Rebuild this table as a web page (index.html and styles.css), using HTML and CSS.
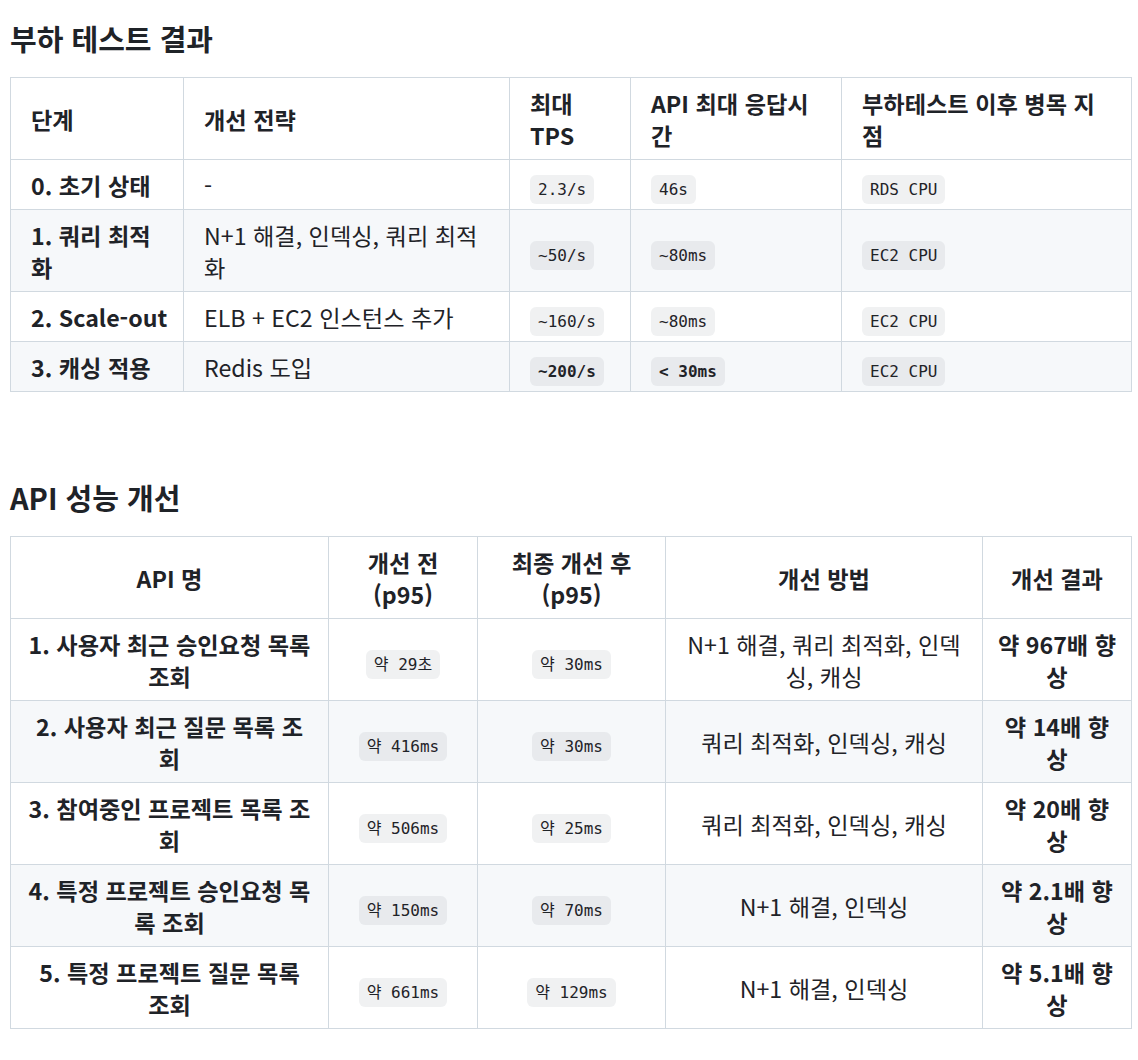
FILE: index.html
```html
<!DOCTYPE html>
<html lang="ko">
<head>
<meta charset="utf-8">
<title>부하 테스트 결과</title>
<link rel="stylesheet" href="styles.css">
</head>
<body>
<main class="doc">
  <section class="section">
    <h2 class="section-title">부하 테스트 결과</h2>
    <table class="grid grid-load">
      <colgroup>
        <col class="c173"><col class="c326"><col class="c121"><col class="c211"><col class="c290">
      </colgroup>
      <thead>
        <tr><th class="step">단계</th><th>개선 전략</th><th>최대 TPS</th><th>API 최대 응답시간</th><th>부하테스트 이후 병목 지점</th></tr>
      </thead>
      <tbody>
        <tr><td class="strong step">0. 초기 상태</td><td>-</td><td><code class="tag">2.3/s</code></td><td><code class="tag">46s</code></td><td><code class="tag">RDS CPU</code></td></tr>
        <tr><td class="strong step">1. 쿼리 최적화</td><td>N+1 해결, 인덱싱, 쿼리 최적화</td><td><code class="tag">~50/s</code></td><td><code class="tag">~80ms</code></td><td><code class="tag">EC2 CPU</code></td></tr>
        <tr><td class="strong step">2. Scale-out</td><td>ELB + EC2 인스턴스 추가</td><td><code class="tag">~160/s</code></td><td><code class="tag">~80ms</code></td><td><code class="tag">EC2 CPU</code></td></tr>
        <tr><td class="strong step">3. 캐싱 적용</td><td>Redis 도입</td><td><code class="tag tag-bold">~200/s</code></td><td><code class="tag tag-bold">&lt; 30ms</code></td><td><code class="tag">EC2 CPU</code></td></tr>
      </tbody>
    </table>
  </section>

  <section class="section section-next">
    <h2 class="section-title">API 성능 개선</h2>
    <table class="grid grid-api">
      <colgroup>
        <col class="c318"><col class="c149"><col class="c188"><col class="c317"><col class="c149">
      </colgroup>
      <thead>
        <tr><th>API 명</th><th>개선 전 (p95)</th><th>최종 개선 후 (p95)</th><th>개선 방법</th><th>개선 결과</th></tr>
      </thead>
      <tbody>
        <tr><td class="strong api">1. 사용자 최근 승인요청 목록 조회</td><td><code class="tag">약 29초</code></td><td><code class="tag">약 30ms</code></td><td>N+1 해결, 쿼리 최적화, 인덱싱, 캐싱</td><td class="strong result">약 967배 향상</td></tr>
        <tr><td class="strong api">2. 사용자 최근 질문 목록 조회</td><td><code class="tag">약 416ms</code></td><td><code class="tag">약 30ms</code></td><td>쿼리 최적화, 인덱싱, 캐싱</td><td class="strong result">약 14배 향상</td></tr>
        <tr><td class="strong api">3. 참여중인 프로젝트 목록 조회</td><td><code class="tag">약 506ms</code></td><td><code class="tag">약 25ms</code></td><td>쿼리 최적화, 인덱싱, 캐싱</td><td class="strong result">약 20배 향상</td></tr>
        <tr><td class="strong api">4. 특정 프로젝트 승인요청 목록 조회</td><td><code class="tag">약 150ms</code></td><td><code class="tag">약 70ms</code></td><td>N+1 해결, 인덱싱</td><td class="strong result">약 2.1배 향상</td></tr>
        <tr><td class="strong api">5. 특정 프로젝트 질문 목록 조회</td><td><code class="tag">약 661ms</code></td><td><code class="tag">약 129ms</code></td><td>N+1 해결, 인덱싱</td><td class="strong result">약 5.1배 향상</td></tr>
      </tbody>
    </table>
  </section>
</main>
</body>
</html>
```

FILE: styles.css
```css
html, body {
  margin: 0;
  padding: 0;
  background: #ffffff;
}

body {
  font-family: "Noto Sans CJK KR", "Noto Sans", sans-serif;
  font-size: 23.2px;
  line-height: 32px;
  color: #1f2328;
}

.doc {
  padding: 0 7px 40px 10px;
}

.section-title {
  margin: 0;
  padding: 20px 0 21px 0;
  font-size: 29px;
  line-height: 36px;
  font-weight: 700;
}

.section-next {
  margin-top: 67px;
}

.grid {
  width: 1121px;
  border-collapse: collapse;
  border-spacing: 0;
  table-layout: fixed;
}

.c173 { width: 173px; }
.c326 { width: 326px; }
.c121 { width: 121px; }
.c211 { width: 211px; }
.c290 { width: 290px; }
.c318 { width: 318px; }
.c149 { width: 149px; }
.c188 { width: 188px; }
.c317 { width: 317px; }

.grid th,
.grid td {
  border: 1px solid #d1d9e0;
  padding: 8.5px 20px;
  vertical-align: middle;
}

.grid th {
  font-weight: 700;
  text-align: left;
}

.grid tbody tr:nth-child(2n) {
  background: #f6f8fa;
}

.grid-load .step {
  padding-right: 15px;
}

.grid-api th,
.grid-api td {
  text-align: center;
}

.grid-api td.api {
  padding-left: 16.5px;
  padding-right: 16.5px;
}

.grid-api td.result {
  padding-left: 13px;
  padding-right: 13px;
}

.strong {
  font-weight: 700;
}

.tag {
  font-family: "DejaVu Sans Mono", "Noto Sans CJK KR", monospace;
  font-size: 16px;
  line-height: 1;
  padding: 5px 8px;
  border-radius: 6px;
  background: rgba(129, 139, 152, 0.12);
  color: #1f2328;
}

.tag-bold {
  font-weight: 700;
}
```
